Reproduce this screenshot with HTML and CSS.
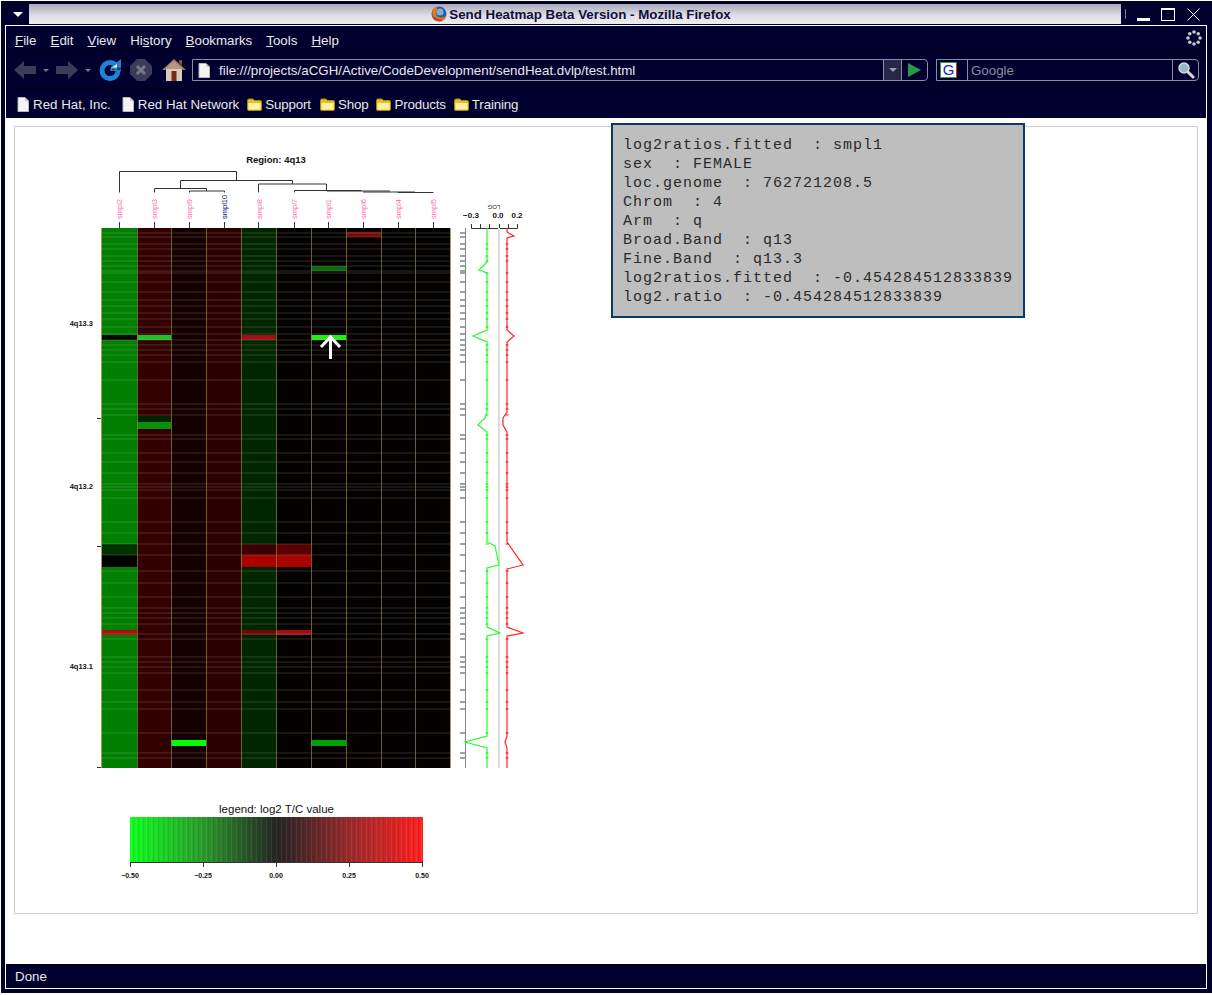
FILE: index.html
```html
<!DOCTYPE html>
<html lang="en">
  <head>
    <meta charset="UTF-8" />
    <title>Send Heatmap Beta Version - Mozilla Firefox</title>
    <link rel="stylesheet" href="styles.css">
  </head>
  <body>
    <!-- shared icons -->
    <svg class="defs" width="0" height="0">
      <defs>
        <symbol id="doc" viewBox="0 0 12 15">
          <path d="M1 .5H8L11.500 4V14.500H1Z" fill="#f4f4f4" stroke="#b8b8b8"/>
          <path d="M8 .5V4H11.500Z" fill="#c8c8c8"/>
        </symbol>
        <symbol id="folder" viewBox="0 0 15 13">
          <path d="M.5 2.500Q.5 1 2 1H6L7.500 2.500H13Q14.500 2.500 14.500 4V11.500Q14.500 12.500 13 12.500H2Q.5 12.500 .5 11.500Z" fill="#e8c020" stroke="#a88a10"/>
          <path d="M1.500 5H13.500V11.500H1.500Z" fill="#fff2a0"/>
        </symbol>
      </defs>
    </svg>

    <div class="window">
      <div class="titlebar">
        <div class="win-menu"><span class="win-menu-arrow"></span></div>
        <div class="title">
          <svg class="fox" width="16" height="16" viewBox="0 0 16 16">
            <circle cx="8" cy="8" r="7.500" fill="#2a5aa8"/>
            <circle cx="9" cy="6" r="3.500" fill="#7ab0e0"/>
            <path d="M2 3Q.5 8 2.500 12Q6 16.500 11 15Q15 13.500 15.500 8.500Q15 11 11 11.500Q6 12 5 8Q5 5.500 7.500 4.500Q5 3.500 6.500 .8Q3.500 1.500 2 3Z" fill="#e8761a"/>
            <path d="M3 11Q6 15 11 14" fill="none" stroke="#c8301a" stroke-width="1.500"/>
          </svg>
          <span class="title-text">Send Heatmap Beta Version - Mozilla Firefox</span>
        </div>
        <div class="win-buttons">
          <span class="win-sep"></span>
          <span class="win-min"></span>
          <span class="win-max"></span>
          <svg class="win-close" width="13" height="13" viewBox="0 0 13 13">
            <path d="M.5 .5L12.500 12.500M12.500 .5L.5 12.500" stroke="#fff" stroke-width="1" fill="none"/>
          </svg>
        </div>
      </div>

      <div class="browser">
        <div class="menubar">
          <span class="menu-item"><u>F</u>ile</span>
          <span class="menu-item"><u>E</u>dit</span>
          <span class="menu-item"><u>V</u>iew</span>
          <span class="menu-item">Hi<u>s</u>tory</span>
          <span class="menu-item"><u>B</u>ookmarks</span>
          <span class="menu-item"><u>T</u>ools</span>
          <span class="menu-item"><u>H</u>elp</span>
          <svg class="throbber" width="16" height="16" viewBox="0 0 16 16" fill="#c8c8c8">
            <circle cx="8" cy="2" r="1.800"/><circle cx="12.200" cy="3.800" r="1.800"/>
            <circle cx="14" cy="8" r="1.800"/><circle cx="12.200" cy="12.200" r="1.800"/>
            <circle cx="8" cy="14" r="1.800"/><circle cx="3.800" cy="12.200" r="1.800"/>
            <circle cx="2" cy="8" r="1.800"/><circle cx="3.800" cy="3.800" r="1.800"/>
          </svg>
        </div>

        <div class="navbar">
          <svg class="nav-back" width="24" height="20" viewBox="0 0 24 20">
            <path d="M1 10L11 1V6H23V14H11V19Z" fill="#3c3c5a"/>
          </svg>
          <span class="nav-drop"></span>
          <svg class="nav-forward" width="23" height="20" viewBox="0 0 23 20">
            <path d="M22 10L12 1V6H0V14H12V19Z" fill="#3c3c5a"/>
          </svg>
          <span class="nav-drop"></span>
          <svg class="nav-reload" width="24" height="24" viewBox="0 0 24 24">
            <circle cx="12" cy="12.500" r="8" fill="none" stroke="#1f82d8" stroke-width="5"/>
            <path d="M13 9L23 1V13H12Z" fill="#1f82d8"/>
            <path d="M13 10L19 6V12Z" fill="#d8f0ff"/>
            <path d="M14 9.500H23V12H14Z" fill="#000033" opacity=".5"/>
          </svg>
          <svg class="nav-stop" width="22" height="22" viewBox="0 0 22 22">
            <path d="M7 0H15L22 7V15L15 22H7L0 15V7Z" fill="#3c3c5a"/>
            <path d="M7 7L15 15M15 7L7 15" stroke="#77778c" stroke-width="3"/>
          </svg>
          <svg class="nav-home" width="24" height="24" viewBox="0 0 24 24">
            <path d="M4 11H20V23H4Z" fill="#d8ccb8"/>
            <path d="M0 12L12 1L24 12L21 12L12 4L3 12Z" fill="#a07c68"/>
            <path d="M12 3L21 11H3Z" fill="#b89884"/>
            <path d="M17 2H20V8L17 5Z" fill="#8a4a3a"/>
            <path d="M9.500 13H14.500V23H9.500Z" fill="#7a2a1a"/>
          </svg>
          <div class="urlbar">
            <svg class="field-doc" width="12" height="15"><use href="#doc"/></svg>
            <span class="url-text">file:///projects/aCGH/Active/CodeDevelopment/sendHeat.dvlp/test.html</span>
            <span class="url-drop"><span class="url-drop-arrow"></span></span>
            <span class="url-go">
              <svg width="13" height="14" viewBox="0 0 13 14"><path d="M0 0L13 7L0 14Z" fill="#2a9a4a"/></svg>
            </span>
          </div>
          <div class="searchbar">
            <span class="engine"><span class="engine-g">G</span></span>
            <span class="search-text">Google</span>
            <span class="search-go">
              <svg width="18" height="18" viewBox="0 0 18 18">
                <path d="M10 10L16 16" stroke="#d8d8d8" stroke-width="3" stroke-linecap="round"/>
                <circle cx="7" cy="7" r="5" fill="#9ab4d0" stroke="#d8d8d8" stroke-width="1.500"/>
              </svg>
            </span>
          </div>
        </div>

        <div class="bookmarks">
          <span class="bookmark"><svg class="bm-doc" width="12" height="15"><use href="#doc"/></svg>Red Hat, Inc.</span>
          <span class="bookmark"><svg class="bm-doc" width="12" height="15"><use href="#doc"/></svg>Red Hat Network</span>
          <span class="bookmark bookmark-folder"><svg class="bm-folder" width="15" height="13"><use href="#folder"/></svg>Support</span>
          <span class="bookmark bookmark-folder"><svg class="bm-folder" width="15" height="13"><use href="#folder"/></svg>Shop</span>
          <span class="bookmark bookmark-folder"><svg class="bm-folder" width="15" height="13"><use href="#folder"/></svg>Products</span>
          <span class="bookmark bookmark-folder"><svg class="bm-folder" width="15" height="13"><use href="#folder"/></svg>Training</span>
        </div>

        <div class="content">
          <div class="plot-frame">
            <!-- viewBox is in window pixels, so the plot can be read off the screenshot -->
            <svg class="plot" width="600" height="785" viewBox="15 127 600 785">
              <defs>
                <path id="rows" d="M0 244H1M0 249H1M0 256H1M0 261H1M0 273H1M0 282H1M0 292H1M0 300H1M0 306H1M0 313H1M0 319H1M0 327H1M0 345H1M0 350H1M0 355H1M0 362H1M0 380H1M0 404H1M0 409H1M0 415H1M0 435H1M0 439H1M0 453H1M0 462H1M0 473H1M0 484H1M0 487H1M0 490H1M0 498H1M0 522H1M0 533H1M0 544H1M0 571H1M0 583H1M0 597H1M0 608H1M0 613H1M0 618H1M0 624H1M0 639H1M0 657H1M0 662H1M0 667H1M0 673H1M0 690H1M0 702H1M0 709H1M0 733H1M0 753H1M0 758H1"/>
                <!-- rows where the log lines swing away, so no dot sits on the baseline -->
                <path id="rows-off" d="M0 233H1M0 237H1M0 266H1M0 271H1M0 334H1M0 340H1M0 555H1M0 634H1"/>
                <linearGradient id="legendFill">
                  <stop offset="0" stop-color="#10ff20"/>
                  <stop offset=".25" stop-color="#2a9a2a"/>
                  <stop offset=".5" stop-color="#242424"/>
                  <stop offset=".75" stop-color="#9a2a2a"/>
                  <stop offset="1" stop-color="#ff2020"/>
                </linearGradient>
                <pattern id="legendStripes" width="5" height="10" patternUnits="userSpaceOnUse">
                  <rect x="1" width="1" height="10" fill="#fff" opacity=".07"/>
                  <rect x="3" width="1" height="10" fill="#000" opacity=".08"/>
                </pattern>
              </defs>

              <text class="plot-title" x="276" y="163" text-anchor="middle">Region: 4q13</text>

              <path class="dendro" d="M119.500 192.500V171.500H236.500V180.500M180.500 180.500H292.500M180.500 180.500V188.500M154.500 192.500V188.500H206.500V191M189.500 192.500V191H224.500V192.500M292.500 180.500V184M258.500 192.500V184H326.500V190.500M294.500 192.500V190.500H361.500M327 191H390M363 192H415M398 192.500H433.500"/>

              <g class="sample-labels">
                <text transform="translate(122 219) rotate(-90)">smpl2</text>
                <text transform="translate(157 219) rotate(-90)">smpl3</text>
                <text transform="translate(192 219) rotate(-90)">smpl9</text>
                <text class="sample-hit" transform="translate(227 219) rotate(-90)">smpl10</text>
                <text transform="translate(262 219) rotate(-90)">smpl8</text>
                <text transform="translate(297 219) rotate(-90)">smpl7</text>
                <text transform="translate(331 219) rotate(-90)">smpl1</text>
                <text transform="translate(366 219) rotate(-90)">smpl6</text>
                <text transform="translate(401 219) rotate(-90)">smpl4</text>
                <text transform="translate(436 219) rotate(-90)">smpl5</text>
              </g>
              <path class="axis" d="M119.500 222V228M154.500 222V228M189.500 222V228M224.500 222V228M258.500 222V228M294.500 222V228M328.500 222V228M363.500 222V228M398.500 222V228M433.500 222V228"/>

              <!-- heatmap columns -->
              <rect x="101" y="228" width="36" height="540" fill="#007f00"/>
              <rect x="137" y="228" width="34" height="540" fill="#330000"/>
              <rect x="171" y="228" width="35" height="540" fill="#140000"/>
              <rect x="206" y="228" width="35" height="540" fill="#2a0000"/>
              <rect x="241" y="228" width="35" height="540" fill="#002600"/>
              <rect x="276" y="228" width="175" height="540" fill="#040000"/>

              <!-- single cells -->
              <rect x="346" y="232" width="35" height="5" fill="#7a0808"/>
              <rect x="311" y="266" width="35" height="5" fill="#0a6a0a"/>
              <rect x="101" y="335" width="36" height="5" fill="#060606"/>
              <rect x="137" y="335" width="34" height="5" fill="#22c022"/>
              <rect x="241" y="335" width="35" height="5" fill="#a01010"/>
              <rect x="311" y="335" width="35" height="5" fill="#22ee11"/>
              <rect x="137" y="416" width="34" height="6" fill="#002200"/>
              <rect x="137" y="422" width="34" height="7" fill="#0a900a"/>
              <rect x="101" y="544" width="36" height="11" fill="#003300"/>
              <rect x="101" y="555" width="36" height="12" fill="#020202"/>
              <rect x="241" y="544" width="35" height="11" fill="#3a0000"/>
              <rect x="276" y="544" width="35" height="11" fill="#5a0000"/>
              <rect x="241" y="555" width="70" height="12" fill="#aa0000"/>
              <rect x="101" y="630" width="36" height="5" fill="#aa1010"/>
              <rect x="241" y="630" width="35" height="5" fill="#6a0808"/>
              <rect x="276" y="630" width="35" height="5" fill="#991010"/>
              <rect x="171" y="740" width="35" height="6" fill="#00ff00"/>
              <rect x="311" y="740" width="35" height="6" fill="#00a000"/>

              <use class="row-lines" href="#rows" transform="translate(101) scale(350 1)"/>
              <use class="row-lines" href="#rows-off" transform="translate(101) scale(350 1)"/>
              <path class="col-lines" d="M137.500 228V768M171.500 228V768M206.500 228V768M241.500 228V768M276.500 228V768M311.500 228V768M346.500 228V768M381.500 228V768M415.500 228V768"/>
              <path class="heat-edge" d="M101.500 228V768M450.500 228V768"/>

              <!-- band labels -->
              <g class="band-labels">
                <text x="93" y="326" text-anchor="end">4q13.3</text>
                <text x="93" y="489" text-anchor="end">4q13.2</text>
                <text x="93" y="669" text-anchor="end">4q13.1</text>
              </g>
              <path class="axis" d="M97 418.500H101M97 546.500H101M97 767.500H101"/>

              <!-- cursor arrow -->
              <path class="cursor-arrow" d="M330.500 359V337M321 347L330.500 337L340 347"/>

              <!-- log ratio side panel -->
              <text class="log-title" transform="translate(494 205) rotate(180)" text-anchor="middle">LOG</text>
              <g class="log-labels">
                <text x="471" y="218" text-anchor="middle">−0.3</text>
                <text x="498" y="218" text-anchor="middle">0.0</text>
                <text x="517" y="218" text-anchor="middle">0.2</text>
              </g>
              <path class="axis" d="M471.500 224V228.500H517.500V224M480.500 224V228M489.500 224V228M499.500 224V228M508.500 224V228"/>
              <path class="axis-light" d="M465.500 228V768"/>
              <use class="axis-ticks" href="#rows" transform="translate(460) scale(5 1)"/>
              <use class="axis-ticks" href="#rows-off" transform="translate(460) scale(5 1)"/>
              <path class="zero-line" d="M499 228V768"/>
              <polyline class="line-green" points="487,228 487,262 479,270 487,273 487,330 473,336 487,342 487,412 485,418 478,425 487,432 487,542 495,546 499,565 487,568 487,627 500,633 487,636 487,736 465,742 487,748 487,768"/>
              <polyline class="line-red" points="507,228 507,232 514,236 507,238 507,330 514,336 507,342 507,412 503,418 503,425 507,432 507,542 523,565 507,569 507,627 523,633 507,636 507,736 505,742 507,748 507,768"/>
              <use class="dots-green" href="#rows" transform="translate(485.500) scale(3 1)"/>
              <use class="dots-red" href="#rows" transform="translate(505.500) scale(3 1)"/>

              <!-- colour legend -->
              <text class="legend-title" x="276.500" y="813" text-anchor="middle">legend: log2 T/C value</text>
              <rect x="130" y="817" width="293" height="45" fill="url(#legendFill)"/>
              <rect x="130" y="817" width="293" height="45" fill="url(#legendStripes)"/>
              <path class="axis" d="M130.500 862V867M203.500 862V867M276.500 862V867M349.500 862V867M422.500 862V867M130.500 862.500H422.500"/>
              <g class="legend-labels">
                <text x="130" y="878" text-anchor="middle">−0.50</text>
                <text x="203" y="878" text-anchor="middle">−0.25</text>
                <text x="276" y="878" text-anchor="middle">0.00</text>
                <text x="349" y="878" text-anchor="middle">0.25</text>
                <text x="422" y="878" text-anchor="middle">0.50</text>
              </g>
            </svg>
          </div>

          <div class="tooltip">
            <div class="tooltip-line">log2ratios.fitted  : smpl1</div>
            <div class="tooltip-line">sex  : FEMALE</div>
            <div class="tooltip-line">loc.genome  : 762721208.5</div>
            <div class="tooltip-line">Chrom  : 4</div>
            <div class="tooltip-line">Arm  : q</div>
            <div class="tooltip-line">Broad.Band  : q13</div>
            <div class="tooltip-line">Fine.Band  : q13.3</div>
            <div class="tooltip-line">log2ratios.fitted  : -0.454284512833839</div>
            <div class="tooltip-line">log2.ratio  : -0.454284512833839</div>
          </div>
        </div>

        <div class="statusbar">Done</div>
      </div>
    </div>
  </body>
</html>
```

FILE: styles.css
```css
html,
body {
  margin: 0;
  background-color: #fff;
}

body {
  font-family: "Liberation Sans", Arial, sans-serif;
  font-size: 13.33px;
  color: #e8e8e8;
}

.defs {
  position: absolute;
}

.window {
  display: flex;
  flex-direction: column;
  box-sizing: border-box;
  width: 1211px;
  height: 992px;
  margin: 1px 0 0 1px;
  padding: 3px 5px 4px 4px;
  background-color: #00002e;
}

/* title bar */
.titlebar {
  display: flex;
  flex: none;
  height: 20px;
  margin-bottom: 1px;
}

.win-menu {
  display: flex;
  align-items: center;
  justify-content: center;
  flex: none;
  width: 24px;
  padding-left: 1px;
  box-sizing: border-box;
}

.win-menu-arrow {
  width: 0;
  height: 0;
  border-left: 5px solid transparent;
  border-right: 5px solid transparent;
  border-top: 5px solid #fff;
}

.title {
  display: flex;
  align-items: center;
  justify-content: center;
  gap: 2px;
  flex: none;
  box-sizing: border-box;
  width: 1092px;
  padding-left: 12px;
  background: linear-gradient(#a8a8b8, #dcdce4 55%, #eeeef2);
}

.title-text {
  font-weight: bold;
  color: #10103a;
}

.win-buttons {
  display: flex;
  align-items: center;
  flex: 1;
  padding-left: 4px;
}

.win-sep {
  width: 1px;
  height: 10px;
  margin-right: 11px;
  background-color: #77778c;
}

.win-min {
  width: 13px;
  height: 3px;
  margin: 10px 11px 0 0;
  background-color: #fff;
}

.win-max {
  box-sizing: border-box;
  width: 14px;
  height: 13px;
  margin-right: 12px;
  border: 1px solid #fff;
  border-top-width: 2px;
}

/* browser chrome */
.browser {
  display: flex;
  flex-direction: column;
  flex: 1;
  min-height: 0;
  border: 1px solid #fff;
  background-color: #00002e;
}

.menubar {
  display: flex;
  align-items: center;
  flex: none;
  gap: 14px;
  box-sizing: border-box;
  height: 26px;
  padding: 3px 0 0 9px;
  border-bottom: 1px solid #000014;
}

.menubar .throbber {
  margin-top: -5px;
  margin-left: auto;
  margin-right: 4px;
}

.navbar {
  display: flex;
  align-items: center;
  flex: none;
  height: 36px;
  padding-left: 7px;
  border-bottom: 1px solid #000014;
}

.nav-drop {
  width: 0;
  height: 0;
  margin: 0 7px 0 6px;
  border-left: 3px solid transparent;
  border-right: 3px solid transparent;
  border-top: 3px solid #77778c;
}

.nav-stop {
  margin: 0 10px 0 8px;
}

.urlbar,
.searchbar {
  display: flex;
  align-items: center;
  box-sizing: border-box;
  height: 22px;
  border: 1px solid #8c8c9c;
}

.urlbar {
  width: 736px;
  margin-left: 6px;
  border-radius: 0 4px 4px 0;
}

.field-doc {
  flex: none;
  margin-left: 5px;
}

.url-text {
  flex: 1;
  margin-left: 9px;
  white-space: nowrap;
}

.url-drop {
  display: flex;
  align-items: center;
  justify-content: center;
  flex: none;
  width: 17px;
  height: 100%;
  border-left: 1px solid #8c8c9c;
  border-right: 1px solid #8c8c9c;
  background-color: #26264a;
}

.url-drop-arrow {
  width: 0;
  height: 0;
  border-left: 4px solid transparent;
  border-right: 4px solid transparent;
  border-top: 4px solid #9a9aa8;
}

.url-go {
  display: flex;
  align-items: center;
  justify-content: center;
  flex: none;
  width: 25px;
}

.searchbar {
  width: 263px;
  margin-left: 8px;
  border-radius: 0 4px 4px 0;
}

.engine {
  display: flex;
  align-items: center;
  flex: none;
  box-sizing: border-box;
  width: 31px;
  height: 100%;
  padding-left: 3px;
  border-right: 1px solid #8c8c9c;
}

.engine-g {
  display: block;
  box-sizing: border-box;
  width: 17px;
  height: 16px;
  border: 1px solid #2a9a4a;
  border-right-color: #c83020;
  background-color: #fff;
  color: #1a2ab8;
  font-size: 15px;
  line-height: 14px;
  text-align: center;
}

.search-text {
  flex: 1;
  margin-left: 3px;
  color: #8c8c9c;
}

.search-go {
  display: flex;
  align-items: center;
  justify-content: center;
  flex: none;
  width: 25px;
  height: 100%;
  border-left: 1px solid #8c8c9c;
}

.bookmarks {
  display: flex;
  align-items: center;
  flex: none;
  gap: 8px;
  height: 29px;
  padding: 1px 0 0 11px;
  box-sizing: border-box;
}

.bookmark {
  display: flex;
  align-items: center;
  white-space: nowrap;
}

.bookmark:first-child {
  margin-right: 3px;
}

.bookmark:nth-child(3) {
  margin-right: 1px;
}

.bookmark-folder {
  letter-spacing: -0.15px;
}

.bm-doc {
  margin-right: 4px;
}

.bm-folder {
  margin-right: 3px;
}

/* page area */
.content {
  position: relative;
  flex: 1;
  min-height: 0;
  padding: 8px;
  background-color: #fff;
}

.plot-frame {
  height: 786px;
  border: 1px solid #ccc;
}

.plot {
  display: block;
}

.tooltip {
  position: absolute;
  top: 5px;
  left: 605px;
  box-sizing: border-box;
  width: 414px;
  height: 195px;
  padding: 11px 10px 9px;
  border: 2px solid #0a3a6a;
  background-color: #bebebe;
  color: #2a2a2a;
  font-family: "Liberation Mono", "Courier New", monospace;
  font-size: 15px;
  line-height: 19px;
  letter-spacing: 1px;
}

.tooltip-line {
  white-space: pre;
}

.statusbar {
  display: flex;
  align-items: center;
  flex: none;
  height: 24px;
  padding-left: 9px;
  border-top: 1px solid #000014;
  box-sizing: border-box;
}

/* heatmap svg */
.plot text {
  font-family: "Liberation Sans", Arial, sans-serif;
  fill: #111;
  opacity: 0.99;
}

.plot .plot-title {
  font-size: 9.500px;
  font-weight: bold;
}

.dendro {
  fill: none;
  stroke: #333;
  stroke-width: 1;
}

.plot .sample-labels text {
  font-size: 7.500px;
  fill: #ff69b4;
}

.plot .sample-labels .sample-hit {
  fill: #000080;
}

.axis {
  fill: none;
  stroke: #333;
  stroke-width: 1;
}

.axis-light {
  fill: none;
  stroke: #888;
  stroke-width: 1;
}

.row-lines {
  stroke: #fff;
  stroke-opacity: 0.17;
  stroke-width: 1;
}

.col-lines {
  fill: none;
  stroke: #8a8030;
  stroke-opacity: 0.75;
  stroke-width: 1;
}

.heat-edge {
  fill: none;
  stroke: #a0a050;
  stroke-width: 1;
}

.plot .band-labels text {
  font-size: 7.500px;
  font-weight: bold;
}

.cursor-arrow {
  fill: none;
  stroke: #fff;
  stroke-width: 3;
}

.plot .log-title {
  font-size: 6px;
}

.plot .log-labels text {
  font-size: 8px;
  font-weight: bold;
}

.axis-ticks {
  stroke: #444;
  stroke-width: 1;
}

.zero-line {
  fill: none;
  stroke: #ddd;
  stroke-width: 2;
}

.line-green {
  fill: none;
  stroke: #22ff22;
  stroke-width: 1.200;
}

.line-red {
  fill: none;
  stroke: #ff2222;
  stroke-width: 1.200;
}

.dots-green {
  stroke: #11ee11;
  stroke-width: 1;
}

.dots-red {
  stroke: #ee1111;
  stroke-width: 1;
}

.plot .legend-title {
  font-size: 11.500px;
}

.plot .legend-labels text {
  font-size: 7px;
  font-weight: bold;
}
```
